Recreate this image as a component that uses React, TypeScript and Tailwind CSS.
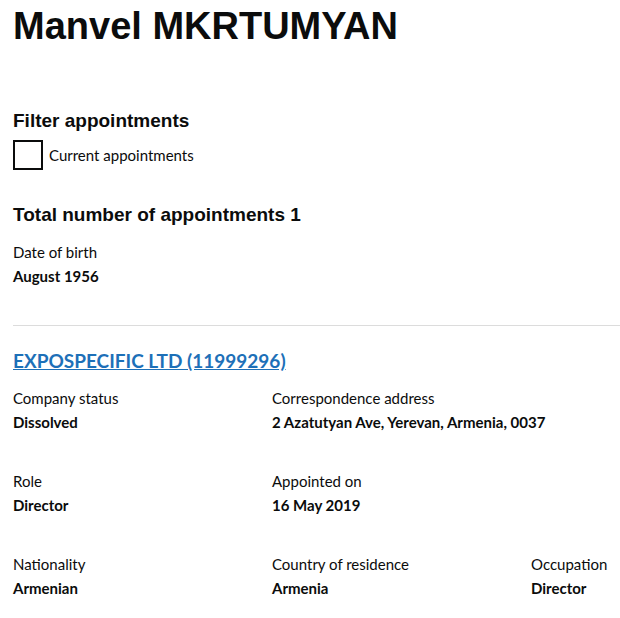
export default function App() {
  const body = "font-['Lato',_sans-serif]";
  return (
    <div className="w-[620px] h-[618px] overflow-hidden bg-white text-[#0b0c0c]">
      <div className="pl-[13px] w-[900px]">
        <h1 className="pt-[6px] font-['Liberation_Sans',_Arial,_sans-serif] text-[38px] leading-[40px] font-bold">
          Manvel MKRTUMYAN
        </h1>
        <h2 className="mt-[65px] font-['Liberation_Sans',_Arial,_sans-serif] text-[19px] leading-[20px] font-bold">
          Filter appointments
        </h2>
        <label className={`mt-[9px] flex items-center gap-[6px] ${body} text-[15px]`}>
          <span className="block w-[30px] h-[30px] border-2 border-[#0b0c0c] bg-white" />
          Current appointments
        </label>
        <h2 className="mt-[35px] font-['Liberation_Sans',_Arial,_sans-serif] text-[19px] leading-[20px] font-bold">
          Total number of appointments 1
        </h2>
        <div className={`mt-[15px] ${body} text-[15px] leading-[24px]`}>
          <div>Date of birth</div>
          <div className="font-bold">August 1956</div>
        </div>
        <hr className="mt-[37px] w-[607px] border-0 border-t border-[#dcdcdc]" />
        <a href="#" className={`mt-[21px] inline-block ${body} text-[19px] font-bold text-[#1d70b8] underline`}>
          EXPOSPECIFIC LTD (11999296)
        </a>
        <dl className={`mt-[10px] grid grid-cols-[259px_259px_259px] gap-y-[35px] ${body} text-[15px] leading-[24px]`}>
          <div>
            <dt>Company status</dt>
            <dd className="font-bold">Dissolved</dd>
          </div>
          <div className="col-span-2">
            <dt>Correspondence address</dt>
            <dd className="font-bold">2 Azatutyan Ave, Yerevan, Armenia, 0037</dd>
          </div>
          <div>
            <dt>Role</dt>
            <dd className="font-bold">Director</dd>
          </div>
          <div className="col-span-2">
            <dt>Appointed on</dt>
            <dd className="font-bold">16 May 2019</dd>
          </div>
          <div>
            <dt>Nationality</dt>
            <dd className="font-bold">Armenian</dd>
          </div>
          <div>
            <dt>Country of residence</dt>
            <dd className="font-bold">Armenia</dd>
          </div>
          <div>
            <dt>Occupation</dt>
            <dd className="font-bold">Director</dd>
          </div>
        </dl>
      </div>
    </div>
  );
}
